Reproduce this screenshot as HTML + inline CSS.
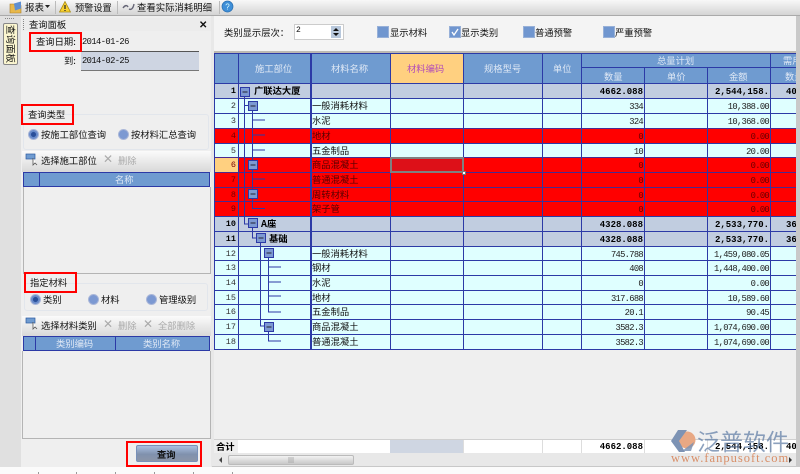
<!DOCTYPE html>
<html><head><meta charset="utf-8"><style>
html,body{margin:0;padding:0}
body{width:800px;height:474px;overflow:hidden;background:#fff;font:9.3px/12px "Noto Sans CJK SC","Liberation Sans",sans-serif;color:#111}
#w{position:absolute;left:0;top:0;width:800px;height:474px;overflow:hidden;filter:blur(.3px);background:#efefef}
#w div,#w span,#w svg{position:absolute;white-space:nowrap}
.t{line-height:12px}
.red{border:2px solid #f00;box-sizing:border-box}
.tb{background:linear-gradient(#fbfbfb,#d8d8d8)}
.rd{width:9px;height:9px;border-radius:50%;background:#7c99d2;border:1px solid #a9b6d8;box-sizing:content-box}
.rd.on{background:radial-gradient(#2a4f9a 35%,#6a8ccb 45%)}
.cb{width:10px;height:10px;background:#7096cf;border:1px solid #97b0d8}
.g{color:#aaa}
.x{color:#aaa;font-size:12px}
.d{font:8.800px/12px "Liberation Mono",monospace;letter-spacing:-.6px}
.r{left:214px;width:582px;height:15px;border-top:1px solid #2c3aa6;box-sizing:border-box;background:#dfffff;overflow:hidden;line-height:13px;color:#111}
.r.b{background:#c1cde0;font-weight:bold;color:#000}
.r.c{background:#f00;color:#500;border-top-color:#4a2a90}
.r span{top:0}
.n{left:0;width:22px;text-align:right;font:8.500px/15px "Liberation Mono",monospace;color:#333}
.b .n{font-weight:bold;color:#000}.c .n{color:#700}
.m{left:98px}
.q,.j,.v{font:8.800px/16px "Liberation Mono",monospace;letter-spacing:-.7px;text-align:right;color:#222}
.q{left:368px;width:61px}
.j{left:494px;width:61px}
.v{width:40px;text-align:left;left:572px}
.b .q,.b .j,.b .v{font-weight:bold;color:#000;font-size:9px;letter-spacing:0}
.c .q,.c .j{color:#600}
.l{width:1px;top:53px;height:296px;background:#2c3aa6}
.s{top:440px;font:bold 9px/14px "Liberation Mono",monospace;color:#000}
</style></head><body><div id="w">

<!-- top toolbar -->
<div style="left:0;top:0;width:800px;height:15px;background:linear-gradient(#f8f8f8,#d4d4d4)"></div>
<div style="left:0;top:15px;width:800px;height:1px;background:#aaa"></div>
<svg style="left:8px;top:0" width="16" height="15"><path d="M2 4h4l1 1.500h6v7.500H2z" fill="#e8b84a" stroke="#a87d2a" stroke-width=".6"/><path d="M6 3.500L13 1.500v7l-6 2z" fill="#5f8fd0"/></svg>
<div class="t" style="left:25px;top:1px;font-size:9.500px">报表</div>
<svg style="left:45px;top:5px" width="6" height="4"><path d="M0 0h5L2.500 3z" fill="#222"/></svg>
<div style="left:55px;top:1px;width:1px;height:13px;background:#bbb"></div>
<svg style="left:59px;top:1px" width="12" height="12"><path d="M6 .5L11.500 11H.5z" fill="#f8d030" stroke="#a88a10" stroke-width=".8"/><path d="M6 4v4M6 9v1" stroke="#222" stroke-width="1.200"/></svg>
<div class="t" style="left:75px;top:1px;font-size:9.200px">预警设置</div>
<div style="left:117px;top:1px;width:1px;height:13px;background:#bbb"></div>
<svg style="left:122px;top:2px" width="13" height="10"><path d="M1 6c2-3 4-3 5-1M7 7c2 1 4 0 5-5" fill="none" stroke="#667" stroke-width="1.400"/></svg>
<div class="t" style="left:137px;top:1px;font-size:9.400px">查看实际消耗明细</div>
<div style="left:219px;top:1px;width:1px;height:13px;background:#bbb"></div>
<svg style="left:221px;top:0" width="13" height="13"><circle cx="6.500" cy="6.500" r="5.500" fill="#3f8fd8" stroke="#2a6fb0" stroke-width=".7"/><text x="6.500" y="9.500" font-size="8" text-anchor="middle" fill="#dff" font-family="Liberation Sans">?</text></svg>

<!-- left strip -->
<div style="left:0;top:16px;width:21px;height:451px;background:#e0e0e0"></div>
<div style="left:5px;top:18px;width:9px;height:1px;border-top:1px dotted #888"></div>
<div style="left:3px;top:23px;width:13px;height:40px;background:#fbf6d0;border:1px solid #888;border-radius:2px"></div>
<div style="left:3px;top:24px;width:15px;height:40px;writing-mode:vertical-rl;text-orientation:sideways;font-size:9.500px;line-height:15px;text-align:center;color:#111">查询面板</div>

<!-- left panel -->
<div style="left:22px;top:18px;width:189px;height:13px;background:#ececec"></div>
<div style="left:23px;top:19px;width:1px;height:11px;border-left:1px dotted #888"></div>
<div class="t" style="left:29px;top:18px">查询面板</div>
<div class="t" style="left:199px;top:18px;font-size:10px;font-weight:bold">✕</div>
<div class="t" style="left:36px;top:35px">查询日期:</div>
<div style="left:81px;top:51px;width:118px;height:20px;background:#ced5e2;border-top:1px solid #555;border-bottom:1px solid #777;box-sizing:border-box"></div>
<div class="d" style="left:82px;top:36px">2014-01-26</div>
<div class="t" style="left:64px;top:54px">到:</div>
<div class="d" style="left:82px;top:55px">2014-02-25</div>

<div style="left:23px;top:114px;width:186px;height:36px;border:1px solid #e2e6ec;border-radius:3px;box-sizing:border-box"></div>
<div class="t" style="left:28px;top:108px;background:#efefef">查询类型</div>
<div class="rd on" style="left:28px;top:129px"></div>
<div class="t" style="left:41px;top:128px">按施工部位查询</div>
<div class="rd" style="left:118px;top:129px"></div>
<div class="t" style="left:131px;top:128px">按材料汇总查询</div>

<div class="tb" style="left:22px;top:151px;width:189px;height:21px"></div>
<svg style="left:25px;top:153px" width="14" height="14"><rect x="1" y="1" width="9" height="5" fill="#6f9bd0" stroke="#2c5aa0" stroke-width=".7"/><path d="M8 5v7l2-2 2 2" fill="#fff" stroke="#555" stroke-width=".8"/></svg>
<div class="t" style="left:41px;top:154px">选择施工部位</div>
<div class="x" style="left:103px;top:153px">✕</div>
<div class="t g" style="left:118px;top:154px">删除</div>
<div style="left:23px;top:172px;width:187px;height:15px;background:#6f9bd0;border:1px solid #2c3aa6;box-sizing:border-box"></div>
<div style="left:39px;top:172px;width:1px;height:15px;background:#2c3aa6"></div>
<div class="t" style="left:115px;top:173px;color:#dfe8f5">名称</div>
<div style="left:23px;top:187px;width:188px;height:87px;border:1px solid #b4b4b4;border-top:0;box-sizing:border-box"></div>

<div style="left:24px;top:283px;width:184px;height:28px;border:1px solid #e2e6ec;border-radius:3px;box-sizing:border-box"></div>
<div class="t" style="left:30px;top:276px;background:#efefef">指定材料</div>
<div class="rd on" style="left:30px;top:294px"></div>
<div class="t" style="left:43px;top:293px">类别</div>
<div class="rd" style="left:88px;top:294px"></div>
<div class="t" style="left:101px;top:293px">材料</div>
<div class="rd" style="left:146px;top:294px"></div>
<div class="t" style="left:159px;top:293px">管理级别</div>

<div class="tb" style="left:22px;top:316px;width:189px;height:20px"></div>
<svg style="left:25px;top:317px" width="14" height="14"><rect x="1" y="1" width="9" height="5" fill="#6f9bd0" stroke="#2c5aa0" stroke-width=".7"/><path d="M8 5v7l2-2 2 2" fill="#fff" stroke="#555" stroke-width=".8"/></svg>
<div class="t" style="left:41px;top:319px">选择材料类别</div>
<div class="x" style="left:103px;top:318px">✕</div>
<div class="t g" style="left:118px;top:319px">删除</div>
<div class="x" style="left:143px;top:318px">✕</div>
<div class="t g" style="left:158px;top:319px">全部删除</div>
<div style="left:23px;top:336px;width:187px;height:15px;background:#6f9bd0;border:1px solid #2c3aa6;box-sizing:border-box"></div>
<div style="left:35px;top:336px;width:1px;height:15px;background:#2c3aa6"></div>
<div style="left:115px;top:336px;width:1px;height:15px;background:#2c3aa6"></div>
<div class="t" style="left:56px;top:337px;color:#dfe8f5">类别编码</div>
<div class="t" style="left:143px;top:337px;color:#dfe8f5">类别名称</div>
<div style="left:22px;top:351px;width:189px;height:88px;border:1px solid #b4b4b4;border-top:0;box-sizing:border-box"></div>

<div style="left:136px;top:445px;width:62px;height:17px;border-radius:2px;background:linear-gradient(#a9c0e2,#8091ad 55%,#8b95a8);border:1px solid #7890b8;box-sizing:border-box"></div>
<div class="t" style="left:157px;top:448px;font-weight:bold;color:#111">查询</div>

<!-- red boxes -->
<div class="red" style="left:29px;top:32px;width:53px;height:20px"></div>
<div class="red" style="left:21px;top:104px;width:53px;height:21px"></div>
<div class="red" style="left:24px;top:272px;width:53px;height:21px"></div>
<div class="red" style="left:126px;top:441px;width:76px;height:26px"></div>

<!-- right top area -->
<div style="left:214px;top:16px;width:582px;height:35px;background:#f4f4f4"></div>
<div style="left:214px;top:51px;width:582px;height:2px;background:#bcb9b2"></div>
<div class="t" style="left:224px;top:26px">类别显示层次：</div>
<div style="left:294px;top:24px;width:50px;height:16px;background:#fff;border:1px solid #ccc;box-sizing:border-box"></div>
<div class="t" style="left:296px;top:25px;font:8px/12px 'Liberation Mono',monospace">2</div>
<svg style="left:331px;top:26px" width="10" height="12"><rect width="10" height="12" fill="#b8c8dc"/><path d="M2 5l3-3 3 3zM2 7l3 3 3-3z" fill="#111"/></svg>
<div class="cb" style="left:377px;top:26px"></div>
<div class="t" style="left:390px;top:26px">显示材料</div>
<div class="cb" style="left:449px;top:26px"></div>
<svg style="left:450px;top:27px" width="10" height="10"><path d="M2 5l2 3 4-6" fill="none" stroke="#fff" stroke-width="1.300"/></svg>
<div class="t" style="left:461px;top:26px">显示类别</div>
<div class="cb" style="left:523px;top:26px"></div>
<div class="t" style="left:535px;top:26px">普通预警</div>
<div class="cb" style="left:603px;top:26px"></div>
<div class="t" style="left:615px;top:26px">严重预警</div>

<!-- table header -->
<div style="left:214px;top:53px;width:582px;height:30px;background:#6f9bd0;border-top:1px solid #2c3aa6;box-sizing:border-box"></div>
<div style="left:391px;top:54px;width:72px;height:29px;background:#ffd080"></div>
<div style="left:582px;top:67px;width:214px;height:1px;background:#2c3aa6"></div>
<div class="t" style="left:255px;top:62px;color:#dfe8f5">施工部位</div>
<div class="t" style="left:331px;top:62px;color:#dfe8f5">材料名称</div>
<div class="t" style="left:407px;top:62px;color:#b24cb8">材料编码</div>
<div class="t" style="left:484px;top:62px;color:#dfe8f5">规格型号</div>
<div class="t" style="left:553px;top:62px;color:#dfe8f5">单位</div>
<div class="t" style="left:657px;top:54px;color:#dfe8f5">总量计划</div>
<div class="t" style="left:604px;top:70px;color:#dfe8f5">数量</div>
<div class="t" style="left:667px;top:70px;color:#dfe8f5">单价</div>
<div class="t" style="left:729px;top:70px;color:#dfe8f5">金额</div>
<div class="t" style="left:783px;top:54px;color:#dfe8f5;width:13px;overflow:hidden">需用</div>
<div class="t" style="left:785px;top:70px;color:#dfe8f5;width:11px;overflow:hidden">数量</div>

<!-- rows -->
<div class="r b" style="top:83px"><span class="n">1</span><span style="left:40px">广联达大厦</span><span class="q">4662.088</span><span class="j">2,544,158.</span><span class="v">40</span></div>
<div class="r" style="top:98px"><span class="n">2</span><span class="m">一般消耗材料</span><span class="q">334</span><span class="j">10,388.00</span></div>
<div class="r" style="top:113px"><span class="n">3</span><span class="m">水泥</span><span class="q">324</span><span class="j">10,368.00</span></div>
<div class="r c" style="top:128px"><span class="n">4</span><span class="m">地材</span><span class="q">0</span><span class="j">0.00</span></div>
<div class="r" style="top:143px"><span class="n">5</span><span class="m">五金制品</span><span class="q">10</span><span class="j">20.00</span></div>
<div class="r c" style="top:157px"><div style="left:0;top:0;width:24px;height:15px;background:#ffd080"></div><span class="n">6</span><span class="m">商品混凝土</span><span class="q">0</span><span class="j">0.00</span></div>
<div class="r c" style="top:172px"><span class="n">7</span><span class="m">普通混凝土</span><span class="q">0</span><span class="j">0.00</span></div>
<div class="r c" style="top:187px"><span class="n">8</span><span class="m">周转材料</span><span class="q">0</span><span class="j">0.00</span></div>
<div class="r c" style="top:201px"><span class="n">9</span><span class="m">架子管</span><span class="q">0</span><span class="j">0.00</span></div>
<div class="r b" style="top:216px"><span class="n">10</span><span style="left:47px">A座</span><span class="q">4328.088</span><span class="j">2,533,770.</span><span class="v">36</span></div>
<div class="r b" style="top:231px"><span class="n">11</span><span style="left:55px">基础</span><span class="q">4328.088</span><span class="j">2,533,770.</span><span class="v">36</span></div>
<div class="r" style="top:246px"><span class="n">12</span><span class="m">一般消耗材料</span><span class="q">745.788</span><span class="j">1,459,080.05</span></div>
<div class="r" style="top:260px"><span class="n">13</span><span class="m">钢材</span><span class="q">408</span><span class="j">1,448,400.00</span></div>
<div class="r" style="top:275px"><span class="n">14</span><span class="m">水泥</span><span class="q">0</span><span class="j">0.00</span></div>
<div class="r" style="top:290px"><span class="n">15</span><span class="m">地材</span><span class="q">317.688</span><span class="j">10,589.60</span></div>
<div class="r" style="top:304px"><span class="n">16</span><span class="m">五金制品</span><span class="q">20.1</span><span class="j">90.45</span></div>
<div class="r" style="top:319px"><span class="n">17</span><span class="m">商品混凝土</span><span class="q">3582.3</span><span class="j">1,074,690.00</span></div>
<div class="r" style="top:334px"><span class="n">18</span><span class="m">普通混凝土</span><span class="q">3582.3</span><span class="j">1,074,690.00</span></div>
<div style="left:214px;top:349px;width:582px;height:1px;background:#2c3aa6"></div>

<!-- column lines -->
<div class="l" style="left:214px"></div>
<div class="l" style="left:238px"></div>
<div class="l" style="left:310px;width:2px"></div>
<div class="l" style="left:390px"></div>
<div class="l" style="left:463px"></div>
<div class="l" style="left:542px"></div>
<div class="l" style="left:581px"></div>
<div class="l" style="left:644px;top:67px;height:282px"></div>
<div class="l" style="left:707px;top:67px;height:282px"></div>
<div class="l" style="left:770px"></div>

<!-- selected cell -->
<div style="left:390px;top:157px;width:74px;height:16px;background:#dd1018;border:2px solid #808080;box-sizing:border-box"></div>
<div style="left:462px;top:171px;width:4px;height:4px;background:#fff;border:1px solid #777;box-sizing:border-box"></div>

<!-- tree -->
<svg style="left:238px;top:83px" width="73" height="266">
<g fill="none" stroke="#2c3aa6" stroke-width="1">
<path d="M6.500 13V141H10"/>
<path d="M6.500 22.500H10"/>
<path d="M14.500 27V125.500H27M14.500 37H27M14.500 52H27M14.500 67H27M14.500 96H27"/>
<path d="M14.500 145V155H18M22.500 160V243H26M30.500 174V229H43M30.500 184H43M30.500 199H43M30.500 213H43M30.500 248V258H43"/>
</g>
<g fill="#7c99d2" stroke="#2c3aa6" stroke-width="1">
<rect x="2.500" y="4.500" width="9" height="9"/><rect x="10.500" y="18.500" width="9" height="9"/>
<rect x="10.500" y="77.500" width="9" height="9"/><rect x="10.500" y="106.500" width="9" height="9"/>
<rect x="10.500" y="135.500" width="9" height="9"/><rect x="18.500" y="150.500" width="9" height="9"/>
<rect x="26.500" y="165.500" width="9" height="9"/><rect x="26.500" y="239.500" width="9" height="9"/>
</g>
<g stroke="#223" stroke-width="1">
<path d="M4.500 9h5M12.500 23h5M12.500 82h5M12.500 111h5M12.500 140h5M20.500 155h5M28.500 170h5M28.500 244h5"/>
</g>
</svg>

<!-- sum row -->
<div style="left:214px;top:439px;width:582px;height:1px;background:#d0d0d0"></div>
<div style="left:238px;top:440px;width:558px;height:13px;background:#fff"></div>
<div style="left:390px;top:440px;width:73px;height:13px;background:#cfd6e2"></div>
<div class="t" style="left:216px;top:440px;font-weight:bold;color:#000">合计</div>
<div style="left:463px;top:440px;width:1px;height:13px;background:#ddd"></div>
<div style="left:542px;top:440px;width:1px;height:13px;background:#ddd"></div>
<div style="left:581px;top:440px;width:1px;height:13px;background:#ddd"></div>
<div style="left:644px;top:440px;width:1px;height:13px;background:#ddd"></div>
<div style="left:707px;top:440px;width:1px;height:13px;background:#ddd"></div>
<div style="left:770px;top:440px;width:1px;height:13px;background:#ddd"></div>
<div class="s" style="left:582px;width:61px;text-align:right">4662.088</div>
<div class="s" style="left:708px;width:61px;text-align:right">2,544,158.</div>
<div class="s" style="left:786px">40</div>

<!-- scrollbar -->
<div style="left:214px;top:453px;width:582px;height:13px;background:#e8e8e8"></div>
<svg style="left:218px;top:456px" width="5" height="8"><path d="M4 1L1 4l3 3z" fill="#444"/></svg>
<div style="left:228px;top:455px;width:126px;height:10px;background:linear-gradient(#f2f2f2,#c8c8c8);border:1px solid #bbb;box-sizing:border-box;border-radius:2px"></div>
<svg style="left:288px;top:457px" width="7" height="6"><path d="M1 0v6M3 0v6M5 0v6" stroke="#999" stroke-width=".7"/></svg>
<svg style="left:788px;top:456px" width="5" height="8"><path d="M1 1l3 3-3 3z" fill="#333"/></svg>
<div style="left:211px;top:16px;width:3px;height:451px;background:#e8e8e8"></div>
<div style="left:796px;top:16px;width:4px;height:451px;background:#c9c9c9"></div>
<div style="left:212px;top:466px;width:584px;height:1px;background:#c8c8c8"></div>

<!-- bottom strip -->
<div style="left:0;top:467px;width:800px;height:7px;background:#fbfbfb"></div>
<div style="left:38px;top:472px;width:1px;height:2px;background:#999"></div>
<div style="left:76px;top:472px;width:1px;height:2px;background:#999"></div>
<div style="left:115px;top:472px;width:1px;height:2px;background:#999"></div>
<div style="left:154px;top:472px;width:1px;height:2px;background:#999"></div>
<div style="left:193px;top:472px;width:1px;height:2px;background:#999"></div>
<div style="left:232px;top:472px;width:1px;height:2px;background:#999"></div>

<!-- watermark -->
<svg style="left:670px;top:429px" width="28" height="25"><circle cx="17" cy="11" r="8.500" fill="#e8a884"/><path d="M8 1h9L9 12l6 11H9L1 12z" fill="#7d93b4"/><path d="M12 22l12-9-3 9z" fill="#7d93b4" opacity=".85"/></svg>
<div style="left:697px;top:426px;font:23px/28px 'Noto Sans CJK SC','WenQuanYi Zen Hei',sans-serif;color:rgba(95,125,165,.72)">泛普软件</div>
<div style="left:671px;top:451px;font:12.500px/14px 'Liberation Serif',serif;letter-spacing:1px;color:#d98f68">www.fanpusoft.com</div>

</div></body></html>
